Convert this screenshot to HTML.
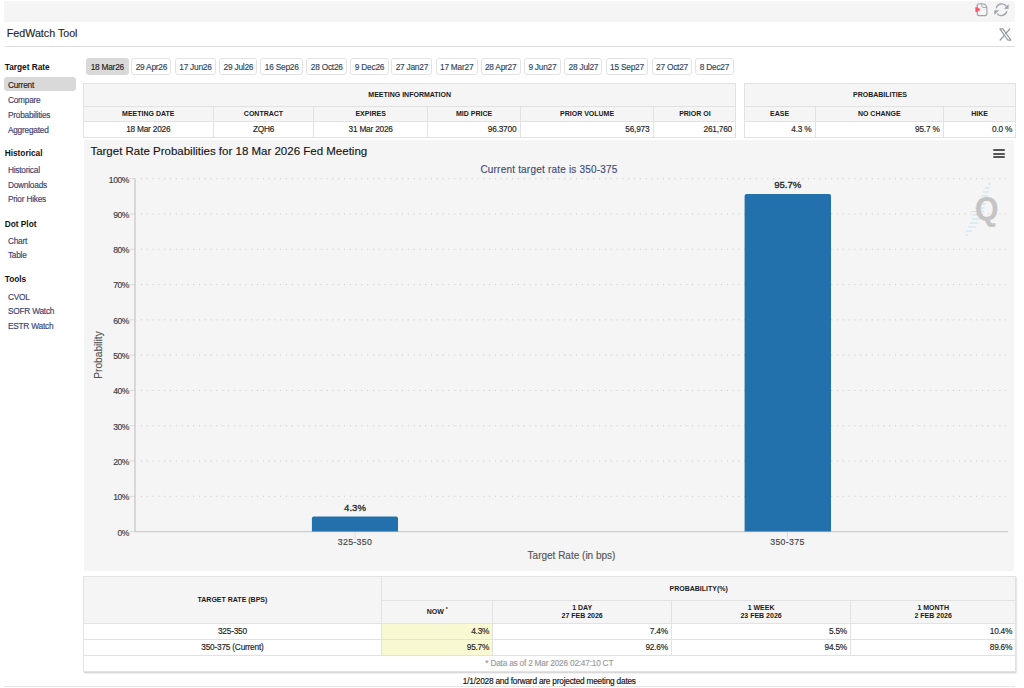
<!DOCTYPE html>
<html><head><meta charset="utf-8"><title>FedWatch Tool</title>
<style>
html,body{margin:0;padding:0;background:#fff;width:1024px;height:688px;overflow:hidden;}
body{position:relative;font-family:"Liberation Sans", sans-serif;}
.t{position:absolute;white-space:nowrap;font-family:"Liberation Sans", sans-serif;-webkit-text-stroke:0.15px currentColor;}
.b{position:absolute;}
</style></head><body>
<div class="b" style="left:4.00px;top:1.00px;width:1011.00px;height:20.50px;background:#f5f5f5;"></div>
<svg class="b" style="left:974px;top:3px" width="16" height="14" viewBox="0 0 16 14">
<path d="M5.4 0.7 L7.8 0.7 Q12.9 0.7 12.9 5.8 L12.9 10.4 Q12.9 12.6 10.7 12.6 L5.4 12.6 Q3.2 12.6 3.2 10.4 L3.2 2.9 Q3.2 0.7 5.4 0.7 Z" fill="none" stroke="#9ea3ad" stroke-width="1.15"/>
<path d="M7.7 0.9 Q7.6 4.3 8.6 4.4 Q9.6 4.6 12.7 4.6" fill="none" stroke="#9ea3ad" stroke-width="1"/>
<path d="M1.7 4.6 Q1.7 3.9 2.3 4.2 L5.9 6.2 Q6.5 6.5 5.9 6.8 L2.3 8.8 Q1.7 9.1 1.7 8.4 Z" fill="#ff5363" stroke="#ff5363" stroke-width="0.6" stroke-linejoin="round"/>
</svg>
<svg class="b" style="left:993px;top:3px" width="17" height="14" viewBox="0 0 17 14">
<path d="M3.2 5.4 A5.6 5.6 0 0 1 13.3 3.3" fill="none" stroke="#9ea3ad" stroke-width="1.3"/>
<path d="M13.8 8.2 A5.6 5.6 0 0 1 4.0 10.6" fill="none" stroke="#9ea3ad" stroke-width="1.3"/>
<path d="M15.4 1.6 L15.4 5.7 L11.3 5.7 Z" fill="#9ea3ad" stroke="#9ea3ad" stroke-width="0.4" stroke-linejoin="round"/>
<path d="M1.6 7.4 L1.6 11.5 L5.7 7.4 Z" fill="#9ea3ad" stroke="#9ea3ad" stroke-width="0.4" stroke-linejoin="round"/>
</svg>
<div class="t" style="left:6.80px;top:27.64px;font-size:10.7px;line-height:10.7px;font-weight:normal;color:#1f1f1f;">FedWatch Tool</div>
<svg class="b" style="left:999px;top:27.5px" width="13" height="13" viewBox="0 0 13 13">
<path d="M0.9 0.9 L3.9 0.9 L11.8 12 L8.8 12 Z" fill="none" stroke="#959aa5" stroke-width="1.25" stroke-linejoin="round"/>
<path d="M10.8 1.0 L6.7 5.7 M5.3 7.3 L1.2 12.0" fill="none" stroke="#959aa5" stroke-width="1.25" stroke-linecap="round"/>
</svg>
<div class="b" style="left:5.00px;top:45.60px;width:1010.00px;height:1.00px;background:#dedede;"></div>
<div class="b" style="left:4.30px;top:77.20px;width:71.70px;height:14.00px;background:#d9d9d9;border-radius:3px;"></div>
<div class="t" style="left:4.70px;top:63.47px;font-size:8.3px;line-height:8.3px;font-weight:bold;color:#111;-webkit-text-stroke:0;">Target Rate</div>
<div class="t" style="left:7.90px;top:80.57px;font-size:8.3px;line-height:8.3px;font-weight:normal;color:#1e1e1e;letter-spacing:-0.22px;">Current</div>
<div class="t" style="left:7.90px;top:95.67px;font-size:8.3px;line-height:8.3px;font-weight:normal;color:#3a4272;letter-spacing:-0.22px;">Compare</div>
<div class="t" style="left:7.90px;top:110.77px;font-size:8.3px;line-height:8.3px;font-weight:normal;color:#3a4272;letter-spacing:-0.22px;">Probabilities</div>
<div class="t" style="left:7.90px;top:125.67px;font-size:8.3px;line-height:8.3px;font-weight:normal;color:#3a4272;letter-spacing:-0.22px;">Aggregated</div>
<div class="t" style="left:4.70px;top:148.67px;font-size:8.3px;line-height:8.3px;font-weight:bold;color:#111;-webkit-text-stroke:0;">Historical</div>
<div class="t" style="left:7.90px;top:166.17px;font-size:8.3px;line-height:8.3px;font-weight:normal;color:#3a4272;letter-spacing:-0.22px;">Historical</div>
<div class="t" style="left:7.90px;top:180.97px;font-size:8.3px;line-height:8.3px;font-weight:normal;color:#3a4272;letter-spacing:-0.22px;">Downloads</div>
<div class="t" style="left:7.90px;top:195.47px;font-size:8.3px;line-height:8.3px;font-weight:normal;color:#3a4272;letter-spacing:-0.22px;">Prior Hikes</div>
<div class="t" style="left:4.70px;top:219.87px;font-size:8.3px;line-height:8.3px;font-weight:bold;color:#111;-webkit-text-stroke:0;">Dot Plot</div>
<div class="t" style="left:7.90px;top:236.77px;font-size:8.3px;line-height:8.3px;font-weight:normal;color:#3a4272;letter-spacing:-0.22px;">Chart</div>
<div class="t" style="left:7.90px;top:251.27px;font-size:8.3px;line-height:8.3px;font-weight:normal;color:#3a4272;letter-spacing:-0.22px;">Table</div>
<div class="t" style="left:4.70px;top:275.17px;font-size:8.3px;line-height:8.3px;font-weight:bold;color:#111;-webkit-text-stroke:0;">Tools</div>
<div class="t" style="left:7.90px;top:292.57px;font-size:8.3px;line-height:8.3px;font-weight:normal;color:#3a4272;letter-spacing:-0.22px;">CVOL</div>
<div class="t" style="left:7.90px;top:307.07px;font-size:8.3px;line-height:8.3px;font-weight:normal;color:#3a4272;letter-spacing:-0.22px;">SOFR Watch</div>
<div class="t" style="left:7.90px;top:321.57px;font-size:8.3px;line-height:8.3px;font-weight:normal;color:#3a4272;letter-spacing:-0.22px;">ESTR Watch</div>
<div class="b" style="left:86.00px;top:57.60px;width:42.60px;height:17.80px;background:#d9d9d9;border-radius:3px;"></div>
<div class="t" style="left:67.30px;width:80px;text-align:center;top:62.57px;font-size:8.3px;line-height:8.3px;font-weight:normal;color:#1e1e1e;letter-spacing:-0.22px;">18 Mar26</div>
<div class="b" style="left:131.40px;top:57.60px;width:40.00px;height:17.80px;background:#fff;border:1px solid #e3e3e3;box-sizing:border-box;border-radius:3px;"></div>
<div class="t" style="left:111.40px;width:80px;text-align:center;top:62.57px;font-size:8.3px;line-height:8.3px;font-weight:normal;color:#2e4560;letter-spacing:-0.22px;">29 Apr26</div>
<div class="b" style="left:174.70px;top:57.60px;width:41.50px;height:17.80px;background:#fff;border:1px solid #e3e3e3;box-sizing:border-box;border-radius:3px;"></div>
<div class="t" style="left:155.45px;width:80px;text-align:center;top:62.57px;font-size:8.3px;line-height:8.3px;font-weight:normal;color:#2e4560;letter-spacing:-0.22px;">17 Jun26</div>
<div class="b" style="left:219.40px;top:57.60px;width:38.00px;height:17.80px;background:#fff;border:1px solid #e3e3e3;box-sizing:border-box;border-radius:3px;"></div>
<div class="t" style="left:198.40px;width:80px;text-align:center;top:62.57px;font-size:8.3px;line-height:8.3px;font-weight:normal;color:#2e4560;letter-spacing:-0.22px;">29 Jul26</div>
<div class="b" style="left:260.20px;top:57.60px;width:43.00px;height:17.80px;background:#fff;border:1px solid #e3e3e3;box-sizing:border-box;border-radius:3px;"></div>
<div class="t" style="left:241.70px;width:80px;text-align:center;top:62.57px;font-size:8.3px;line-height:8.3px;font-weight:normal;color:#2e4560;letter-spacing:-0.22px;">16 Sep26</div>
<div class="b" style="left:306.40px;top:57.60px;width:40.80px;height:17.80px;background:#fff;border:1px solid #e3e3e3;box-sizing:border-box;border-radius:3px;"></div>
<div class="t" style="left:286.80px;width:80px;text-align:center;top:62.57px;font-size:8.3px;line-height:8.3px;font-weight:normal;color:#2e4560;letter-spacing:-0.22px;">28 Oct26</div>
<div class="b" style="left:350.00px;top:57.60px;width:39.10px;height:17.80px;background:#fff;border:1px solid #e3e3e3;box-sizing:border-box;border-radius:3px;"></div>
<div class="t" style="left:329.55px;width:80px;text-align:center;top:62.57px;font-size:8.3px;line-height:8.3px;font-weight:normal;color:#2e4560;letter-spacing:-0.22px;">9 Dec26</div>
<div class="b" style="left:391.40px;top:57.60px;width:40.90px;height:17.80px;background:#fff;border:1px solid #e3e3e3;box-sizing:border-box;border-radius:3px;"></div>
<div class="t" style="left:371.85px;width:80px;text-align:center;top:62.57px;font-size:8.3px;line-height:8.3px;font-weight:normal;color:#2e4560;letter-spacing:-0.22px;">27 Jan27</div>
<div class="b" style="left:435.50px;top:57.60px;width:42.30px;height:17.80px;background:#fff;border:1px solid #e3e3e3;box-sizing:border-box;border-radius:3px;"></div>
<div class="t" style="left:416.65px;width:80px;text-align:center;top:62.57px;font-size:8.3px;line-height:8.3px;font-weight:normal;color:#2e4560;letter-spacing:-0.22px;">17 Mar27</div>
<div class="b" style="left:480.60px;top:57.60px;width:40.20px;height:17.80px;background:#fff;border:1px solid #e3e3e3;box-sizing:border-box;border-radius:3px;"></div>
<div class="t" style="left:460.70px;width:80px;text-align:center;top:62.57px;font-size:8.3px;line-height:8.3px;font-weight:normal;color:#2e4560;letter-spacing:-0.22px;">28 Apr27</div>
<div class="b" style="left:523.60px;top:57.60px;width:37.60px;height:17.80px;background:#fff;border:1px solid #e3e3e3;box-sizing:border-box;border-radius:3px;"></div>
<div class="t" style="left:502.40px;width:80px;text-align:center;top:62.57px;font-size:8.3px;line-height:8.3px;font-weight:normal;color:#2e4560;letter-spacing:-0.22px;">9 Jun27</div>
<div class="b" style="left:564.40px;top:57.60px;width:38.00px;height:17.80px;background:#fff;border:1px solid #e3e3e3;box-sizing:border-box;border-radius:3px;"></div>
<div class="t" style="left:543.40px;width:80px;text-align:center;top:62.57px;font-size:8.3px;line-height:8.3px;font-weight:normal;color:#2e4560;letter-spacing:-0.22px;">28 Jul27</div>
<div class="b" style="left:605.50px;top:57.60px;width:42.90px;height:17.80px;background:#fff;border:1px solid #e3e3e3;box-sizing:border-box;border-radius:3px;"></div>
<div class="t" style="left:586.95px;width:80px;text-align:center;top:62.57px;font-size:8.3px;line-height:8.3px;font-weight:normal;color:#2e4560;letter-spacing:-0.22px;">15 Sep27</div>
<div class="b" style="left:651.60px;top:57.60px;width:40.90px;height:17.80px;background:#fff;border:1px solid #e3e3e3;box-sizing:border-box;border-radius:3px;"></div>
<div class="t" style="left:632.05px;width:80px;text-align:center;top:62.57px;font-size:8.3px;line-height:8.3px;font-weight:normal;color:#2e4560;letter-spacing:-0.22px;">27 Oct27</div>
<div class="b" style="left:695.30px;top:57.60px;width:38.30px;height:17.80px;background:#fff;border:1px solid #e3e3e3;box-sizing:border-box;border-radius:3px;"></div>
<div class="t" style="left:674.45px;width:80px;text-align:center;top:62.57px;font-size:8.3px;line-height:8.3px;font-weight:normal;color:#2e4560;letter-spacing:-0.22px;">8 Dec27</div>
<div class="b" style="left:83.20px;top:82.80px;width:653.00px;height:55.20px;background:#fff;border:1px solid #e2e2e2;box-sizing:border-box;"></div>
<div class="b" style="left:84.20px;top:84.00px;width:651.00px;height:37.00px;background:#f5f5f5;"></div>
<div class="b" style="left:83.20px;top:106.30px;width:653.00px;height:1.00px;background:#e2e2e2;"></div>
<div class="b" style="left:83.20px;top:120.60px;width:653.00px;height:1.00px;background:#e2e2e2;"></div>
<div class="b" style="left:212.80px;top:107.30px;width:1.00px;height:30.70px;background:#e2e2e2;"></div>
<div class="b" style="left:313.20px;top:107.30px;width:1.00px;height:30.70px;background:#e2e2e2;"></div>
<div class="b" style="left:427.10px;top:107.30px;width:1.00px;height:30.70px;background:#e2e2e2;"></div>
<div class="b" style="left:520.00px;top:107.30px;width:1.00px;height:30.70px;background:#e2e2e2;"></div>
<div class="b" style="left:653.10px;top:107.30px;width:1.00px;height:30.70px;background:#e2e2e2;"></div>
<div class="t" style="left:309.70px;width:200px;text-align:center;top:91.07px;font-size:7px;line-height:7px;font-weight:bold;color:#1a1a1a;-webkit-text-stroke:0;">MEETING INFORMATION</div>
<div class="t" style="left:78.25px;width:140px;text-align:center;top:109.97px;font-size:7px;line-height:7px;font-weight:bold;color:#1a1a1a;-webkit-text-stroke:0;">MEETING DATE</div>
<div class="t" style="left:78.25px;width:140px;text-align:center;top:124.67px;font-size:8.3px;line-height:8.3px;font-weight:normal;color:#222;letter-spacing:-0.22px;">18 Mar 2026</div>
<div class="t" style="left:193.50px;width:140px;text-align:center;top:109.97px;font-size:7px;line-height:7px;font-weight:bold;color:#1a1a1a;-webkit-text-stroke:0;">CONTRACT</div>
<div class="t" style="left:193.50px;width:140px;text-align:center;top:124.67px;font-size:8.3px;line-height:8.3px;font-weight:normal;color:#222;letter-spacing:-0.22px;">ZQH6</div>
<div class="t" style="left:300.65px;width:140px;text-align:center;top:109.97px;font-size:7px;line-height:7px;font-weight:bold;color:#1a1a1a;-webkit-text-stroke:0;">EXPIRES</div>
<div class="t" style="left:300.65px;width:140px;text-align:center;top:124.67px;font-size:8.3px;line-height:8.3px;font-weight:normal;color:#222;letter-spacing:-0.22px;">31 Mar 2026</div>
<div class="t" style="left:404.05px;width:140px;text-align:center;top:109.97px;font-size:7px;line-height:7px;font-weight:bold;color:#1a1a1a;-webkit-text-stroke:0;">MID PRICE</div>
<div class="t" style="left:376.30px;width:140px;text-align:right;top:124.67px;font-size:8.3px;line-height:8.3px;font-weight:normal;color:#222;letter-spacing:-0.22px;">96.3700</div>
<div class="t" style="left:517.05px;width:140px;text-align:center;top:109.97px;font-size:7px;line-height:7px;font-weight:bold;color:#1a1a1a;-webkit-text-stroke:0;">PRIOR VOLUME</div>
<div class="t" style="left:509.40px;width:140px;text-align:right;top:124.67px;font-size:8.3px;line-height:8.3px;font-weight:normal;color:#222;letter-spacing:-0.22px;">56,973</div>
<div class="t" style="left:624.90px;width:140px;text-align:center;top:109.97px;font-size:7px;line-height:7px;font-weight:bold;color:#1a1a1a;-webkit-text-stroke:0;">PRIOR OI</div>
<div class="t" style="left:592.00px;width:140px;text-align:right;top:124.67px;font-size:8.3px;line-height:8.3px;font-weight:normal;color:#222;letter-spacing:-0.22px;">261,760</div>
<div class="b" style="left:744.00px;top:82.80px;width:272.00px;height:55.20px;background:#fff;border:1px solid #e2e2e2;box-sizing:border-box;"></div>
<div class="b" style="left:745.00px;top:84.00px;width:270.00px;height:37.00px;background:#f5f5f5;"></div>
<div class="b" style="left:744.00px;top:106.30px;width:272.00px;height:1.00px;background:#e2e2e2;"></div>
<div class="b" style="left:744.00px;top:120.60px;width:272.00px;height:1.00px;background:#e2e2e2;"></div>
<div class="b" style="left:814.70px;top:107.30px;width:1.00px;height:30.70px;background:#e2e2e2;"></div>
<div class="b" style="left:942.90px;top:107.30px;width:1.00px;height:30.70px;background:#e2e2e2;"></div>
<div class="t" style="left:780.00px;width:200px;text-align:center;top:91.07px;font-size:7px;line-height:7px;font-weight:bold;color:#1a1a1a;-webkit-text-stroke:0;">PROBABILITIES</div>
<div class="t" style="left:709.60px;width:140px;text-align:center;top:109.97px;font-size:7px;line-height:7px;font-weight:bold;color:#1a1a1a;-webkit-text-stroke:0;">EASE</div>
<div class="t" style="left:671.40px;width:140px;text-align:right;top:124.87px;font-size:8.3px;line-height:8.3px;font-weight:normal;color:#222;letter-spacing:-0.22px;">4.3 %</div>
<div class="t" style="left:809.30px;width:140px;text-align:center;top:109.97px;font-size:7px;line-height:7px;font-weight:bold;color:#1a1a1a;-webkit-text-stroke:0;">NO CHANGE</div>
<div class="t" style="left:799.60px;width:140px;text-align:right;top:124.87px;font-size:8.3px;line-height:8.3px;font-weight:normal;color:#222;letter-spacing:-0.22px;">95.7 %</div>
<div class="t" style="left:909.70px;width:140px;text-align:center;top:109.97px;font-size:7px;line-height:7px;font-weight:bold;color:#1a1a1a;-webkit-text-stroke:0;">HIKE</div>
<div class="t" style="left:872.20px;width:140px;text-align:right;top:124.87px;font-size:8.3px;line-height:8.3px;font-weight:normal;color:#222;letter-spacing:-0.22px;">0.0 %</div>
<div class="b" style="left:83.60px;top:139.80px;width:930.80px;height:430.90px;background:#f5f5f5;border-radius:2.5px;"></div>
<svg class="b" style="left:0;top:0" width="1024" height="688"><line x1="141" y1="496.31" x2="1006" y2="496.31" stroke="#c8c8c8" stroke-width="1" stroke-dasharray="1 4.8"/><line x1="129.5" y1="496.31" x2="135" y2="496.31" stroke="#d8d8d8" stroke-width="1"/><line x1="141" y1="461.02" x2="1006" y2="461.02" stroke="#c8c8c8" stroke-width="1" stroke-dasharray="1 4.8"/><line x1="129.5" y1="461.02" x2="135" y2="461.02" stroke="#d8d8d8" stroke-width="1"/><line x1="141" y1="425.73" x2="1006" y2="425.73" stroke="#c8c8c8" stroke-width="1" stroke-dasharray="1 4.8"/><line x1="129.5" y1="425.73" x2="135" y2="425.73" stroke="#d8d8d8" stroke-width="1"/><line x1="141" y1="390.44" x2="1006" y2="390.44" stroke="#c8c8c8" stroke-width="1" stroke-dasharray="1 4.8"/><line x1="129.5" y1="390.44" x2="135" y2="390.44" stroke="#d8d8d8" stroke-width="1"/><line x1="141" y1="355.15" x2="1006" y2="355.15" stroke="#c8c8c8" stroke-width="1" stroke-dasharray="1 4.8"/><line x1="129.5" y1="355.15" x2="135" y2="355.15" stroke="#d8d8d8" stroke-width="1"/><line x1="141" y1="319.86" x2="1006" y2="319.86" stroke="#c8c8c8" stroke-width="1" stroke-dasharray="1 4.8"/><line x1="129.5" y1="319.86" x2="135" y2="319.86" stroke="#d8d8d8" stroke-width="1"/><line x1="141" y1="284.57" x2="1006" y2="284.57" stroke="#c8c8c8" stroke-width="1" stroke-dasharray="1 4.8"/><line x1="129.5" y1="284.57" x2="135" y2="284.57" stroke="#d8d8d8" stroke-width="1"/><line x1="141" y1="249.28" x2="1006" y2="249.28" stroke="#c8c8c8" stroke-width="1" stroke-dasharray="1 4.8"/><line x1="129.5" y1="249.28" x2="135" y2="249.28" stroke="#d8d8d8" stroke-width="1"/><line x1="141" y1="213.99" x2="1006" y2="213.99" stroke="#c8c8c8" stroke-width="1" stroke-dasharray="1 4.8"/><line x1="129.5" y1="213.99" x2="135" y2="213.99" stroke="#d8d8d8" stroke-width="1"/><line x1="141" y1="178.70" x2="1006" y2="178.70" stroke="#c8c8c8" stroke-width="1" stroke-dasharray="1 4.8"/><line x1="129.5" y1="178.70" x2="135" y2="178.70" stroke="#d8d8d8" stroke-width="1"/><line x1="129.5" y1="531.60" x2="135" y2="531.60" stroke="#d8d8d8" stroke-width="1"/><line x1="135" y1="178.20" x2="135" y2="532.10" stroke="#c8c8c8" stroke-width="1.3"/><line x1="135" y1="531.60" x2="1008.2" y2="531.60" stroke="#cdcdcd" stroke-width="1.1"/><line x1="355.0" y1="532.20" x2="355.0" y2="538.7" stroke="#d0d0d0" stroke-width="0.8"/><line x1="787.4" y1="532.20" x2="787.4" y2="538.7" stroke="#d0d0d0" stroke-width="0.8"/><path d="M311.9 531.6 L311.9 518.4 Q311.9 516.4 313.9 516.4 L396.0 516.4 Q398.0 516.4 398.0 518.4 L398.0 531.6 Z" fill="#2271ad"/><path d="M744.6 531.6 L744.6 196.0 Q744.6 194.0 746.6 194.0 L829.0 194.0 Q831.0 194.0 831.0 196.0 L831.0 531.6 Z" fill="#2271ad"/></svg>
<div class="t" style="left:89.00px;width:40px;text-align:right;top:528.52px;font-size:8.6px;line-height:8.6px;font-weight:normal;color:#3c3c3c;letter-spacing:-0.45px;">0%</div>
<div class="t" style="left:89.00px;width:40px;text-align:right;top:493.23px;font-size:8.6px;line-height:8.6px;font-weight:normal;color:#3c3c3c;letter-spacing:-0.45px;">10%</div>
<div class="t" style="left:89.00px;width:40px;text-align:right;top:457.94px;font-size:8.6px;line-height:8.6px;font-weight:normal;color:#3c3c3c;letter-spacing:-0.45px;">20%</div>
<div class="t" style="left:89.00px;width:40px;text-align:right;top:422.65px;font-size:8.6px;line-height:8.6px;font-weight:normal;color:#3c3c3c;letter-spacing:-0.45px;">30%</div>
<div class="t" style="left:89.00px;width:40px;text-align:right;top:387.36px;font-size:8.6px;line-height:8.6px;font-weight:normal;color:#3c3c3c;letter-spacing:-0.45px;">40%</div>
<div class="t" style="left:89.00px;width:40px;text-align:right;top:352.07px;font-size:8.6px;line-height:8.6px;font-weight:normal;color:#3c3c3c;letter-spacing:-0.45px;">50%</div>
<div class="t" style="left:89.00px;width:40px;text-align:right;top:316.78px;font-size:8.6px;line-height:8.6px;font-weight:normal;color:#3c3c3c;letter-spacing:-0.45px;">60%</div>
<div class="t" style="left:89.00px;width:40px;text-align:right;top:281.49px;font-size:8.6px;line-height:8.6px;font-weight:normal;color:#3c3c3c;letter-spacing:-0.45px;">70%</div>
<div class="t" style="left:89.00px;width:40px;text-align:right;top:246.20px;font-size:8.6px;line-height:8.6px;font-weight:normal;color:#3c3c3c;letter-spacing:-0.45px;">80%</div>
<div class="t" style="left:89.00px;width:40px;text-align:right;top:210.91px;font-size:8.6px;line-height:8.6px;font-weight:normal;color:#3c3c3c;letter-spacing:-0.45px;">90%</div>
<div class="t" style="left:89.00px;width:40px;text-align:right;top:175.62px;font-size:8.6px;line-height:8.6px;font-weight:normal;color:#3c3c3c;letter-spacing:-0.45px;">100%</div>
<div class="t" style="left:315.00px;width:80px;text-align:center;top:537.95px;font-size:8.8px;line-height:8.8px;font-weight:normal;color:#444;letter-spacing:0.3px;">325-350</div>
<div class="t" style="left:747.40px;width:80px;text-align:center;top:538.05px;font-size:8.8px;line-height:8.8px;font-weight:normal;color:#444;letter-spacing:0.3px;">350-375</div>
<div class="t" style="left:315.00px;width:80px;text-align:center;top:503.07px;font-size:9.6px;line-height:9.6px;font-weight:normal;color:#262626;-webkit-text-stroke:0.3px #262626;">4.3%</div>
<div class="t" style="left:747.80px;width:80px;text-align:center;top:180.17px;font-size:9.6px;line-height:9.6px;font-weight:normal;color:#262626;-webkit-text-stroke:0.3px #262626;">95.7%</div>
<div class="t" style="left:90.40px;top:145.57px;font-size:11.5px;line-height:11.5px;font-weight:normal;color:#151515;">Target Rate Probabilities for 18 Mar 2026 Fed Meeting</div>
<div class="t" style="left:429.00px;width:240px;text-align:center;top:164.73px;font-size:10px;line-height:10px;font-weight:normal;color:#3f4c78;letter-spacing:0.2px;">Current target rate is 350-375</div>
<div class="t" style="left:471.50px;width:200px;text-align:center;top:550.53px;font-size:10px;line-height:10px;font-weight:normal;color:#555;">Target Rate (in bps)</div>
<div class="t" style="left:49.00px;top:349.60px;width:100px;height:10px;line-height:10px;font-size:10.2px;color:#555;text-align:center;transform:rotate(-90deg);">Probability</div>
<div class="b" style="left:993.20px;top:149.00px;width:11.40px;height:2.10px;background:#555;border-radius:1px;"></div>
<div class="b" style="left:993.20px;top:152.70px;width:11.40px;height:2.10px;background:#555;border-radius:1px;"></div>
<div class="b" style="left:993.20px;top:156.40px;width:11.40px;height:2.10px;background:#555;border-radius:1px;"></div>
<svg class="b" style="left:960px;top:180px" width="40" height="58" viewBox="0 0 40 58">
<g stroke="#a8dbf2" stroke-width="1.1" opacity="0.6">
<line x1="28" y1="4" x2="31" y2="4"/><line x1="25" y1="8" x2="30" y2="8"/><line x1="23" y1="12" x2="29" y2="12"/>
<line x1="21" y1="16" x2="28" y2="16"/><line x1="19" y1="20" x2="27" y2="20"/><line x1="17" y1="24" x2="26" y2="24"/>
<line x1="15" y1="28" x2="25" y2="28"/><line x1="11" y1="31.5" x2="24" y2="31.5"/>
<line x1="13" y1="35" x2="22" y2="35"/><line x1="12" y1="39" x2="20" y2="39"/><line x1="10" y1="43" x2="18" y2="43"/>
<line x1="8" y1="47" x2="16" y2="47"/><line x1="6" y1="51" x2="12" y2="51"/><line x1="5" y1="55" x2="8" y2="55"/>
</g></svg>
<div class="t" style="left:975px;top:189.5px;font-size:34px;line-height:36px;font-weight:bold;color:#c4c4c4;transform:scaleX(0.89);transform-origin:0 0;">Q</div>
<div class="b" style="left:83.40px;top:576.30px;width:932.40px;height:95.40px;background:#fff;border:1px solid #e2e2e2;box-sizing:border-box;box-shadow:0.5px 1px 1.5px rgba(0,0,0,0.25);"></div>
<div class="b" style="left:84.40px;top:577.30px;width:930.40px;height:46.00px;background:#f5f5f5;"></div>
<div class="b" style="left:381.50px;top:623.30px;width:111.30px;height:32.30px;background:#f8f8d3;"></div>
<div class="b" style="left:381.50px;top:600.00px;width:634.30px;height:1.00px;background:#e2e2e2;"></div>
<div class="b" style="left:83.40px;top:622.80px;width:932.40px;height:1.00px;background:#e2e2e2;"></div>
<div class="b" style="left:83.40px;top:639.00px;width:932.40px;height:1.00px;background:#e2e2e2;"></div>
<div class="b" style="left:83.40px;top:655.10px;width:932.40px;height:1.00px;background:#e2e2e2;"></div>
<div class="b" style="left:381.00px;top:576.30px;width:1.00px;height:79.30px;background:#e2e2e2;"></div>
<div class="b" style="left:492.30px;top:600.50px;width:1.00px;height:55.10px;background:#e2e2e2;"></div>
<div class="b" style="left:671.00px;top:600.50px;width:1.00px;height:55.10px;background:#e2e2e2;"></div>
<div class="b" style="left:850.10px;top:600.50px;width:1.00px;height:55.10px;background:#e2e2e2;"></div>
<div class="t" style="left:132.45px;width:200px;text-align:center;top:595.77px;font-size:7px;line-height:7px;font-weight:bold;color:#1a1a1a;-webkit-text-stroke:0;">TARGET RATE (BPS)</div>
<div class="t" style="left:598.65px;width:200px;text-align:center;top:585.07px;font-size:7px;line-height:7px;font-weight:bold;color:#1a1a1a;-webkit-text-stroke:0;">PROBABILITY(%)</div>
<div class="t" style="left:387.15px;width:100px;text-align:center;top:608.07px;font-size:7px;line-height:7px;font-weight:bold;color:#1a1a1a;-webkit-text-stroke:0;">NOW <sup style="font-size:5px;vertical-align:3px;line-height:0">*</sup></div>
<div class="t" style="left:512.15px;width:140px;text-align:center;top:603.67px;font-size:7px;line-height:7px;font-weight:bold;color:#1a1a1a;-webkit-text-stroke:0;">1 DAY</div>
<div class="t" style="left:512.15px;width:140px;text-align:center;top:612.17px;font-size:7px;line-height:7px;font-weight:bold;color:#1a1a1a;-webkit-text-stroke:0;">27 FEB 2026</div>
<div class="t" style="left:691.05px;width:140px;text-align:center;top:603.67px;font-size:7px;line-height:7px;font-weight:bold;color:#1a1a1a;-webkit-text-stroke:0;">1 WEEK</div>
<div class="t" style="left:691.05px;width:140px;text-align:center;top:612.17px;font-size:7px;line-height:7px;font-weight:bold;color:#1a1a1a;-webkit-text-stroke:0;">23 FEB 2026</div>
<div class="t" style="left:863.20px;width:140px;text-align:center;top:603.67px;font-size:7px;line-height:7px;font-weight:bold;color:#1a1a1a;-webkit-text-stroke:0;">1 MONTH</div>
<div class="t" style="left:863.20px;width:140px;text-align:center;top:612.17px;font-size:7px;line-height:7px;font-weight:bold;color:#1a1a1a;-webkit-text-stroke:0;">2 FEB 2026</div>
<div class="t" style="left:132.45px;width:200px;text-align:center;top:626.57px;font-size:8.3px;line-height:8.3px;font-weight:normal;color:#222;letter-spacing:-0.22px;">325-350</div>
<div class="t" style="left:389.20px;width:100px;text-align:right;top:626.57px;font-size:8.3px;line-height:8.3px;font-weight:normal;color:#222;letter-spacing:-0.22px;">4.3%</div>
<div class="t" style="left:567.90px;width:100px;text-align:right;top:626.57px;font-size:8.3px;line-height:8.3px;font-weight:normal;color:#222;letter-spacing:-0.22px;">7.4%</div>
<div class="t" style="left:747.00px;width:100px;text-align:right;top:626.57px;font-size:8.3px;line-height:8.3px;font-weight:normal;color:#222;letter-spacing:-0.22px;">5.5%</div>
<div class="t" style="left:912.20px;width:100px;text-align:right;top:626.57px;font-size:8.3px;line-height:8.3px;font-weight:normal;color:#222;letter-spacing:-0.22px;">10.4%</div>
<div class="t" style="left:132.45px;width:200px;text-align:center;top:642.67px;font-size:8.3px;line-height:8.3px;font-weight:normal;color:#222;letter-spacing:-0.22px;">350-375 (Current)</div>
<div class="t" style="left:389.20px;width:100px;text-align:right;top:642.67px;font-size:8.3px;line-height:8.3px;font-weight:normal;color:#222;letter-spacing:-0.22px;">95.7%</div>
<div class="t" style="left:567.90px;width:100px;text-align:right;top:642.67px;font-size:8.3px;line-height:8.3px;font-weight:normal;color:#222;letter-spacing:-0.22px;">92.6%</div>
<div class="t" style="left:747.00px;width:100px;text-align:right;top:642.67px;font-size:8.3px;line-height:8.3px;font-weight:normal;color:#222;letter-spacing:-0.22px;">94.5%</div>
<div class="t" style="left:912.20px;width:100px;text-align:right;top:642.67px;font-size:8.3px;line-height:8.3px;font-weight:normal;color:#222;letter-spacing:-0.22px;">89.6%</div>
<div class="t" style="left:429.30px;width:240px;text-align:center;top:659.17px;font-size:8.3px;line-height:8.3px;font-weight:normal;color:#9a9a9a;letter-spacing:-0.22px;">* Data as of 2 Mar 2026 02:47:10 CT</div>
<div class="t" style="left:399.30px;width:300px;text-align:center;top:676.97px;font-size:8.3px;line-height:8.3px;font-weight:normal;color:#111;letter-spacing:-0.22px;">1/1/2028 and forward are projected meeting dates</div>
<div class="b" style="left:4.00px;top:686.00px;width:1011.00px;height:1.00px;background:#e6e6e6;"></div>
</body></html>
